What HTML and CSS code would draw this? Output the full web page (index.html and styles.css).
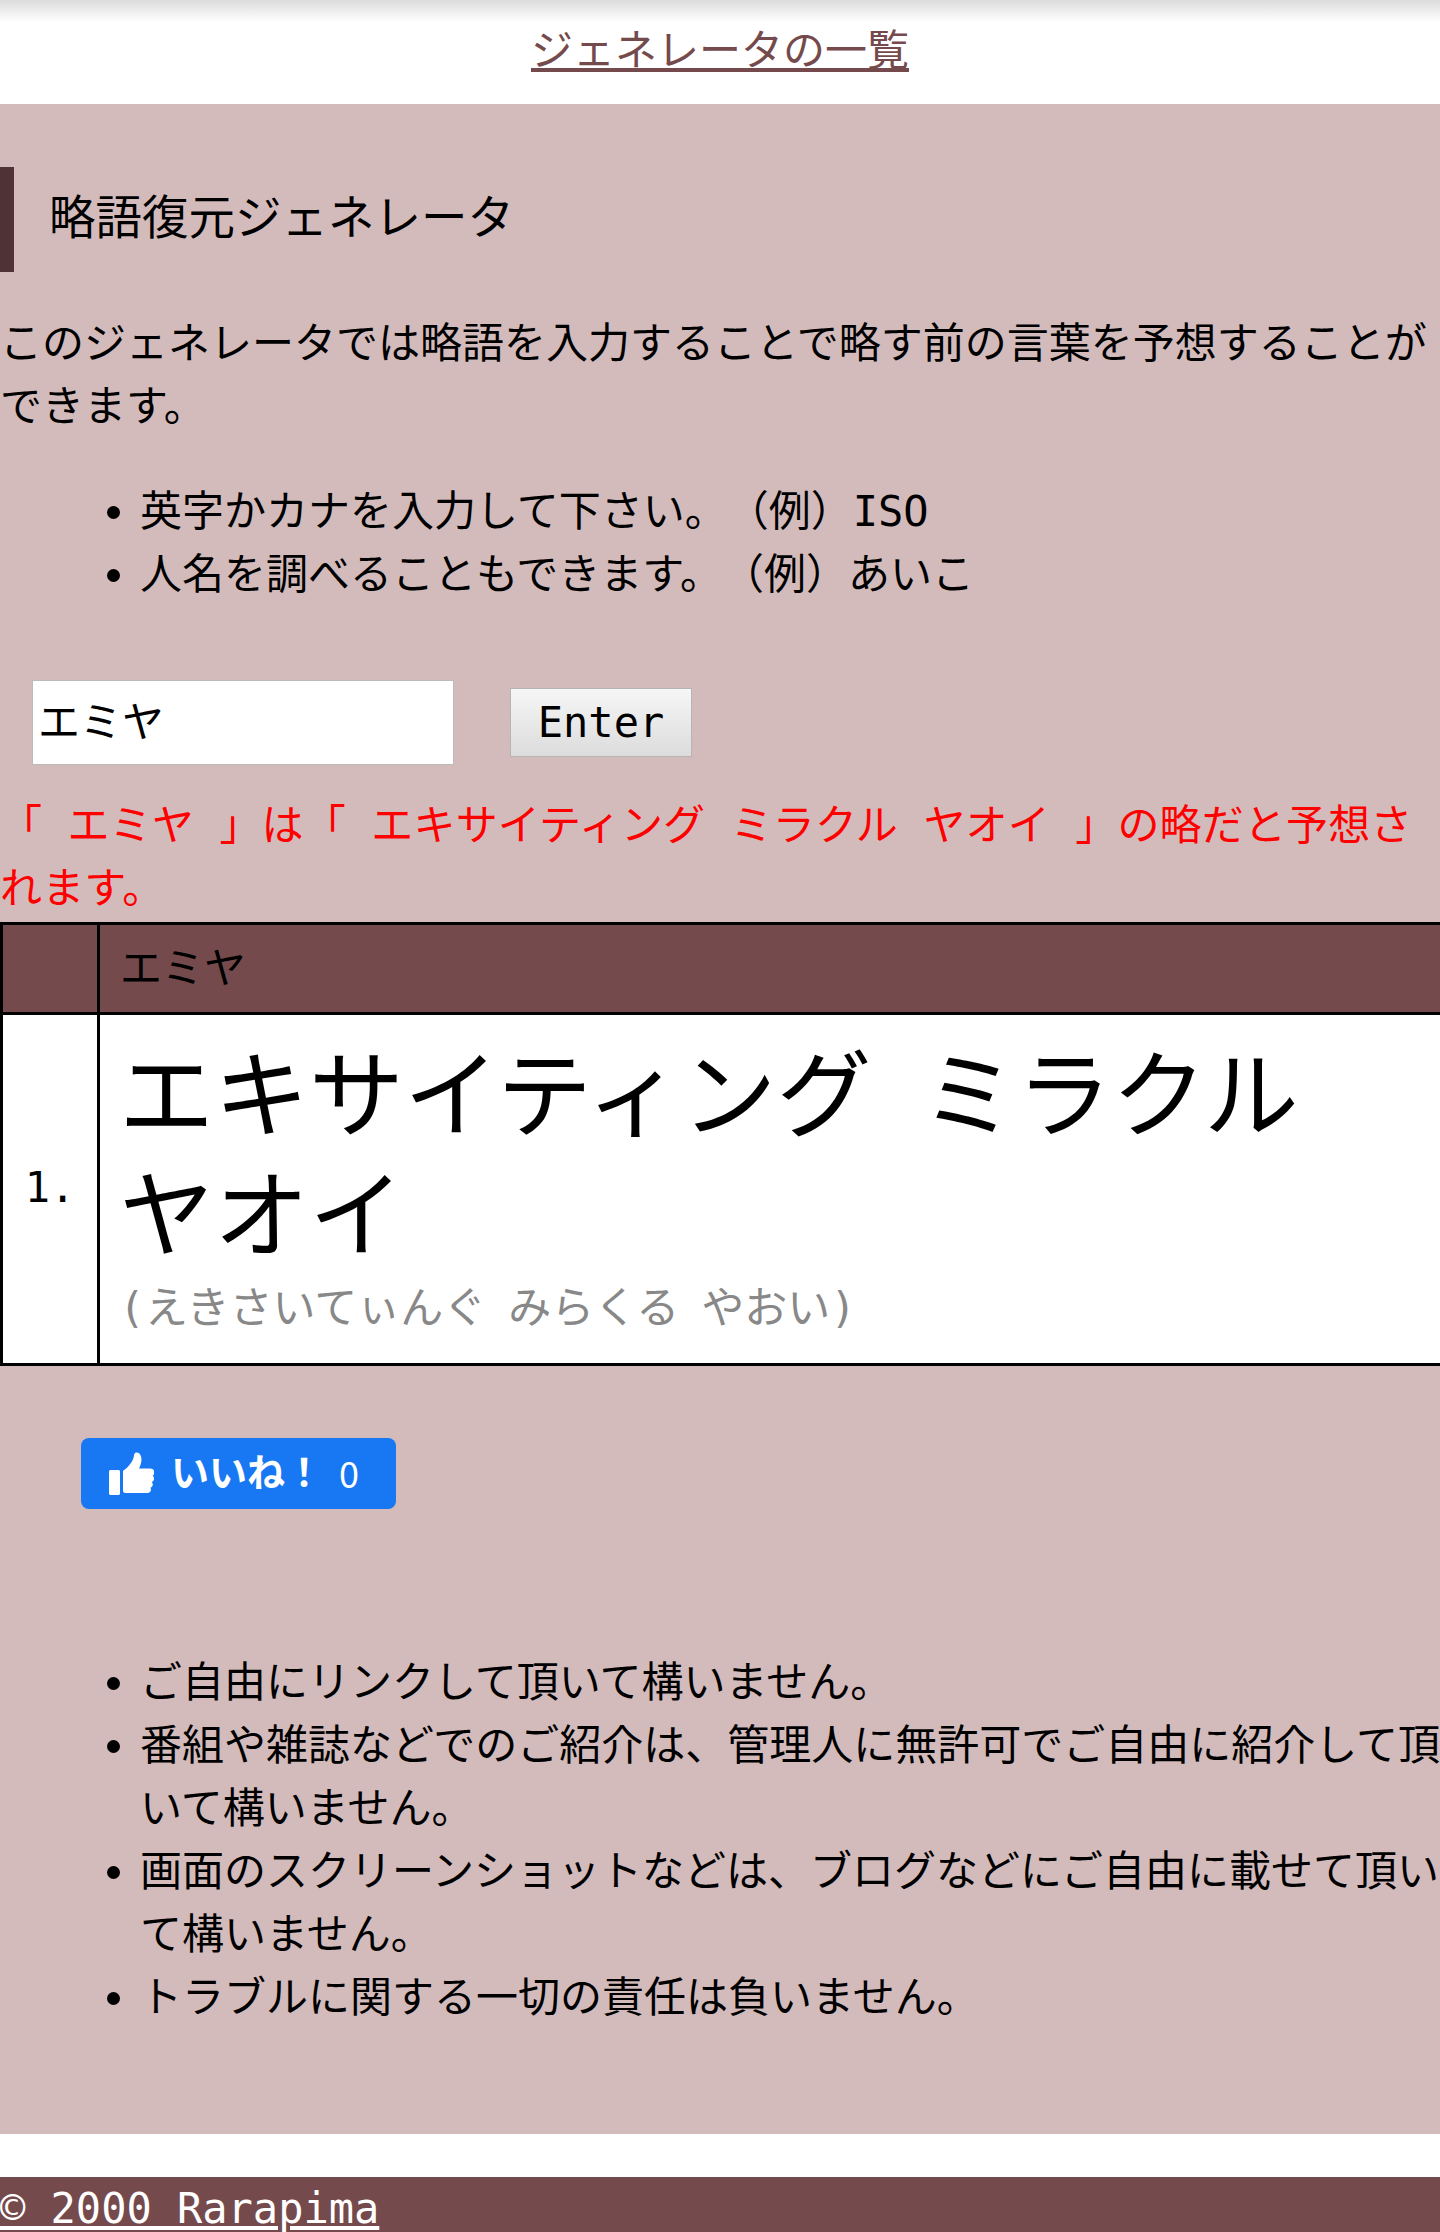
FILE: index.html
```html
<!DOCTYPE html>
<html lang="ja">
  <head>
    <meta charset="UTF-8" />
    <meta name="viewport" content="width=device-width, initial-scale=1.0" />
    <title>略語復元ジェネレータ</title>
    <link rel="stylesheet" href="styles.css">
  </head>
  <body>
    <nav class="top-nav">
      <a href="#">ジェネレータの一覧</a>
    </nav>

    <main class="content">
      <h1 class="page-title">略語復元ジェネレータ</h1>
      <p class="intro">このジェネレータでは略語を入力することで略す前の言葉を予想することができます。</p>

      <ul class="notes">
        <li>英字かカナを入力して下さい。（例）ISO</li>
        <li>人名を調べることもできます。（例）あいこ</li>
      </ul>

      <form class="search-form">
        <input class="search-input" type="text" name="word" value="エミヤ" />
        <button class="search-button" type="submit">Enter</button>
      </form>

      <p class="result-text">「 エミヤ 」は「 エキサイティング ミラクル ヤオイ 」の略だと予想されます。</p>

      <table class="result-table">
        <tr>
          <th class="num-cell"></th>
          <th class="word-head">エミヤ</th>
        </tr>
        <tr>
          <td class="num-cell">1.</td>
          <td class="word-cell">
            <div class="word-big">エキサイティング ミラクル ヤオイ</div>
            <div class="word-kana">(えきさいてぃんぐ みらくる やおい)</div>
          </td>
        </tr>
      </table>

      <a class="like-button" href="#">
        <svg class="like-icon" viewBox="0 0 46 46" aria-hidden="true">
          <path d="M1 20.5c0-.8.7-1.5 1.5-1.5h8c.8 0 1.5.7 1.5 1.5v22c0 .8-.7 1.5-1.5 1.5h-8c-.8 0-1.5-.7-1.5-1.5z" />
          <path d="M15 41V20c4-3 9-8 10.500-13 .7-2.500.3-5 2.800-5.500 3-.5 5.200 3 5.200 7 0 3.500-1.500 7-2.500 9h11c3 0 4.500 1.800 4.500 3.800 0 1.700-1 2.900-2 3.400 1 .7 1.500 1.700 1.500 3 0 1.500-.9 2.700-2.200 3.200.7.700 1 1.600 1 2.600 0 1.600-1 2.800-2.400 3.300.4.600.6 1.300.6 2 0 2-1.500 3.200-3.500 3.200H18c-1.800 0-3-.6-3-2.500z" />
        </svg>
        <span class="like-label">いいね！</span>
        <span class="like-count">0</span>
      </a>

      <ul class="notes notes-bottom">
        <li>ご自由にリンクして頂いて構いません。</li>
        <li>番組や雑誌などでのご紹介は、管理人に無許可でご自由に紹介して頂いて構いません。</li>
        <li>画面のスクリーンショットなどは、ブログなどにご自由に載せて頂いて構いません。</li>
        <li>トラブルに関する一切の責任は負いません。</li>
      </ul>
    </main>

    <footer class="site-footer">
      <a href="#">© 2000 Rarapima</a>
    </footer>
  </body>
</html>
```

FILE: styles.css
```css
:root {
  --bg-color: #d3bbbc;
  --dark-color: #754a4c;
  --bar-color: #4f3235;
}

html {
  height: 2232px;
  overflow: hidden;
}

body {
  margin: 0;
  height: 2232px;
  overflow: hidden;
  background-color: #fff;
  color: #000;
  font-family: "DejaVu Sans Mono", "Noto Sans CJK JP", monospace;
  font-size: 42px;
  line-height: 63px;
  text-spacing-trim: space-all;
}

.top-nav {
  height: 104px;
  box-sizing: border-box;
  padding-top: 19px;
  text-align: center;
  background: linear-gradient(#dcdcdc, #fff 22px);
}

.top-nav a {
  color: var(--dark-color);
}

.content {
  padding: 63px 0 105px;
  background-color: var(--bg-color);
  overflow: hidden;
}

.page-title {
  margin: 0 0 40px;
  padding: 0 0 0 35px;
  height: 105px;
  border-left: 14px solid var(--bar-color);
  font-size: 46.5px;
  font-weight: normal;
  line-height: 103px;
}

.intro {
  margin: 0;
  width: 1440px;
}

.notes {
  margin: 42px 0 0;
  padding: 0 0 0 140px;
  width: 1310px;
}

.search-form {
  display: flex;
  align-items: center;
  gap: 56px;
  margin: 74px 0 0 32px;
}

.search-input {
  box-sizing: border-box;
  width: 422px;
  height: 85px;
  padding: 0 5px 8px;
  border: 1px solid #bbb;
  background-color: #fff;
  font: inherit;
  color: #000;
}

.search-button {
  box-sizing: border-box;
  width: 182px;
  height: 69px;
  padding: 0;
  border: 1px solid #b5b5b5;
  background: linear-gradient(#f6f6f6, #dcdcdc);
  font: inherit;
  line-height: 1;
  color: #000;
}

.result-text {
  margin: 29px 0 0;
  width: 1440px;
  letter-spacing: 0.15px;
  color: #f00;
}

.result-table {
  width: 1450px;
  margin-top: 2px;
  border-collapse: collapse;
}

.result-table th,
.result-table td {
  border: 3px solid #000;
  padding: 0;
  text-align: left;
  font-weight: normal;
}

.result-table th {
  height: 87px;
  background-color: var(--dark-color);
}

.result-table td {
  background-color: #fff;
}

.result-table .num-cell {
  width: 94px;
  text-align: center;
}

.result-table td.num-cell {
  padding-bottom: 4px;
}

.word-head {
  padding-left: 20px !important;
}

.word-cell {
  padding: 22px 19px 23px !important;
}

.word-big {
  font-size: 95px;
  line-height: 120px;
  word-spacing: -7px;
}

.word-kana {
  font-size: 43px;
  word-spacing: -4px;
  color: #888;
}

.like-button {
  display: flex;
  align-items: center;
  width: 315px;
  height: 71px;
  margin: 72px 0 0 81px;
  box-sizing: border-box;
  padding-left: 27px;
  border-radius: 8px;
  background-color: #1877f2;
  color: #fff;
  text-decoration: none;
  font-family: "Noto Sans CJK JP", sans-serif;
}

.like-icon {
  width: 46px;
  height: 46px;
  fill: #fff;
}

.like-label {
  margin-left: 17px;
  padding-bottom: 8px;
  font-size: 38px;
  font-weight: bold;
  line-height: 1;
}

.like-count {
  margin-left: 16px;
  padding-bottom: 4px;
  font-size: 36px;
  line-height: 1;
}

.notes-bottom {
  margin-top: 142px;
}

.site-footer {
  margin-top: 43px;
  background-color: var(--dark-color);
}

.site-footer a {
  color: #fff;
}
```
